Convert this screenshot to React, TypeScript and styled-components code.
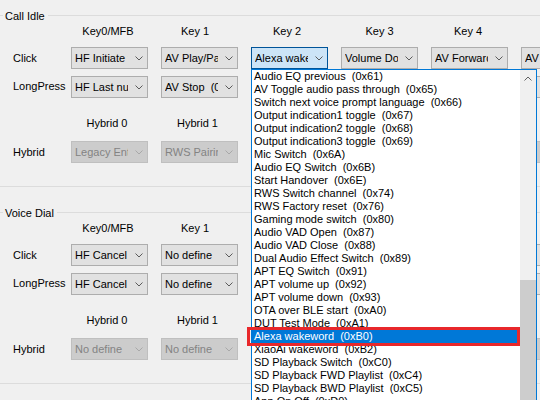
import React from "react";
import styled, { createGlobalStyle, css } from "styled-components";

const GlobalStyle = createGlobalStyle`
  html, body { margin: 0; padding: 0; background: #f0f0f0; }
  body {
    font-family: "Liberation Sans", Arial, sans-serif;
    font-size: 11px;
    color: #000;
  }
`;

const Window = styled.div`
  position: relative;
  width: 540px;
  height: 400px;
  overflow: hidden;
  background: #f0f0f0;
  padding-top: 10px;
  box-sizing: border-box;
`;

const Group = styled.section`
  display: flex;
  flex-direction: column;
  & + & {
    margin-top: 20px;
  }
`;

const TitleRow = styled.div`
  display: flex;
  align-items: flex-start;
  height: 13px;
  line-height: 13px;
`;

const TitleLine = styled.div<{ $grow?: boolean }>`
  height: 1px;
  margin-top: 5px;
  background: #dcdcdc;
  ${(p) => (p.$grow ? "flex: 1;" : "width: 3px;")}
`;

const TitleText = styled.span`
  padding: 0 3px 0 2px;
  white-space: nowrap;
`;

const Grid = styled.div<{ $top: number; $h: number }>`
  display: grid;
  grid-template-columns: 58px repeat(6, 77px);
  column-gap: 13px;
  align-items: center;
  height: ${(p) => p.$h}px;
  margin-top: ${(p) => p.$top}px;
`;

const HeaderCell = styled.div<{ $nudge?: number }>`
  text-align: center;
  white-space: nowrap;
  line-height: 14px;
  margin-left: ${(p) => ((p.$nudge ?? 0) > 0 ? (p.$nudge ?? 0) * 2 : 0)}px;
  margin-right: ${(p) => ((p.$nudge ?? 0) < 0 ? -(p.$nudge ?? 0) * 2 : 0)}px;
`;

const RowLabel = styled.div<{ $dy?: number }>`
  padding-left: 13px;
  white-space: nowrap;
  line-height: 13px;
  margin-top: ${(p) => (p.$dy ?? 0) * 2}px;
`;

type ComboState = "normal" | "open" | "disabled";

const ComboBox = styled.div<{ $state: ComboState }>`
  box-sizing: border-box;
  width: 77px;
  height: 22px;
  display: flex;
  align-items: center;
  border: 1px solid #adadad;
  background: #e1e1e1;
  color: #000;
  ${(p) =>
    p.$state === "open" &&
    css`
      border-color: #005499;
      background: #cce4f7;
    `}
  ${(p) =>
    p.$state === "disabled" &&
    css`
      border-color: #bfbfbf;
      background: #cccccc;
      color: #838383;
    `}
`;

const ComboText = styled.span`
  width: 53px;
  margin-left: 3px;
  overflow: hidden;
  white-space: pre;
  line-height: 13px;
`;

const ChevronSvg = styled.svg`
  margin-left: auto;
  margin-right: 4px;
  flex: none;
`;

const Chevron = ({ color, up }: { color: string; up?: boolean }) => (
  <ChevronSvg width="8" height="5" viewBox="0 0 8 5">
    <path
      d={up ? "M0.5 4.5 L4 1 L7.5 4.5" : "M0.5 0.5 L4 4 L7.5 0.5"}
      fill="none"
      stroke={color}
      strokeWidth="1"
    />
  </ChevronSvg>
);

const Combo = ({ text, state = "normal" }: { text: string; state?: ComboState }) => (
  <ComboBox $state={state}>
    <ComboText>{text}</ComboText>
    <Chevron color={state === "disabled" ? "#a8a8a8" : "#5a5a5a"} />
  </ComboBox>
);

const BottomLine = styled.div`
  height: 1px;
  background: #dcdcdc;
  margin-top: 23px;
`;

/* Dropdown list */
const DropDown = styled.div`
  position: absolute;
  left: 251px;
  top: 69px;
  width: 286px;
  height: 360px;
  box-sizing: border-box;
  border: 1px solid #0078d7;
  background: #fff;
  display: flex;
  z-index: 2;
`;

const ItemList = styled.ul`
  list-style: none;
  margin: 0;
  padding: 0;
  flex: 1;
  overflow: hidden;
`;

const Item = styled.li<{ $selected?: boolean }>`
  height: 13px;
  line-height: 13px;
  padding-left: 2px;
  white-space: pre;
  color: ${(p) => (p.$selected ? "#fff" : "#000")};
  background: ${(p) => (p.$selected ? "#0078d7" : "transparent")};
`;

const ScrollBar = styled.div`
  width: 16px;
  flex: none;
  background: #f0f0f0;
  display: flex;
  flex-direction: column;
`;

const ScrollButton = styled.div`
  height: 17px;
  display: flex;
  align-items: center;
  justify-content: center;
  & > svg {
    margin: 0;
  }
`;

const ScrollThumb = styled.div`
  margin-top: 193px;
  flex: 1;
  background: #cdcdcd;
`;

const Highlight = styled.div`
  position: absolute;
  left: 247px;
  top: 327px;
  width: 273px;
  height: 19px;
  box-sizing: border-box;
  border: 3px solid #e8282b;
  z-index: 3;
`;

const items = [
  "Audio EQ previous  (0x61)",
  "AV Toggle audio pass through  (0x65)",
  "Switch next voice prompt language  (0x66)",
  "Output indication1 toggle  (0x67)",
  "Output indication2 toggle  (0x68)",
  "Output indication3 toggle  (0x69)",
  "Mic Switch  (0x6A)",
  "Audio EQ Switch  (0x6B)",
  "Start Handover  (0x6E)",
  "RWS Switch channel  (0x74)",
  "RWS Factory reset  (0x76)",
  "Gaming mode switch  (0x80)",
  "Audio VAD Open  (0x87)",
  "Audio VAD Close  (0x88)",
  "Dual Audio Effect Switch  (0x89)",
  "APT EQ Switch  (0x91)",
  "APT volume up  (0x92)",
  "APT volume down  (0x93)",
  "OTA over BLE start  (0xA0)",
  "DUT Test Mode  (0xA1)",
  "Alexa wakeword  (0xB0)",
  "XiaoAi wakeword  (0xB2)",
  "SD Playback Switch  (0xC0)",
  "SD Playback FWD Playlist  (0xC4)",
  "SD Playback BWD Playlist  (0xC5)",
  "App On Off  (0xD0)",
];

type GroupData = {
  title: string;
  click: string[];
  longPress: string[];
  hybrid: string[];
  openIndex?: number;
};

/* columns 2-5 below the first row sit behind the open list: no visible text */
const groups: GroupData[] = [
  {
    title: "Call Idle",
    click: ["HF Initiate voice dial", "AV Play/Pause", "Alexa wakeword  (0xB0)", "Volume Down", "AV Forward", "AV Backward"],
    longPress: ["HF Last number redial", "AV Stop  (0x..)", "", "", "", ""],
    hybrid: ["Legacy Enter pairing", "RWS Pairing", "", "", "", ""],
    openIndex: 2,
  },
  {
    title: "Voice Dial",
    click: ["HF Cancel voice dial", "No define  (0x00)", "", "", "", ""],
    longPress: ["HF Cancel voice dial", "No define  (0x00)", "", "", "", ""],
    hybrid: ["No define  (0x00)", "No define  (0x00)", "", "", "", ""],
  },
];

const keyHeaders: [string, number][] = [
  ["Key0/MFB", -1.5],
  ["Key 1", -4.5],
  ["Key 2", -2.5],
  ["Key 3", 0],
  ["Key 4", -1.5],
  ["", 0],
];
const hybridHeaders: [string, number][] = [
  ["Hybrid 0", -2.5],
  ["Hybrid 1", -2],
  ["", 0],
  ["", 0],
  ["", 0],
  ["", 0],
];

const KeyGroup = ({ g, showKeyHeaders }: { g: GroupData; showKeyHeaders: [string, number][] }) => (
  <Group>
    <TitleRow>
      <TitleLine />
      <TitleText>{g.title}</TitleText>
      <TitleLine $grow />
    </TitleRow>
    <Grid $top={1} $h={14}>
      <span />
      {showKeyHeaders.map(([h, n], i) => (
        <HeaderCell key={i} $nudge={n}>
          {h}
        </HeaderCell>
      ))}
    </Grid>
    <Grid $top={9} $h={22}>
      <RowLabel>Click</RowLabel>
      {g.click.map((t, i) => (
        <Combo key={i} text={t} state={g.openIndex === i ? "open" : "normal"} />
      ))}
    </Grid>
    <Grid $top={7} $h={22}>
      <RowLabel $dy={-1}>LongPress</RowLabel>
      {g.longPress.map((t, i) => (
        <Combo key={i} text={t} />
      ))}
    </Grid>
    <Grid $top={18} $h={14}>
      <span />
      {hybridHeaders.map(([h, n], i) => (
        <HeaderCell key={i} $nudge={n}>
          {h}
        </HeaderCell>
      ))}
    </Grid>
    <Grid $top={11} $h={22}>
      <RowLabel $dy={0.5}>Hybrid</RowLabel>
      {g.hybrid.map((t, i) => (
        <Combo key={i} text={t} state="disabled" />
      ))}
    </Grid>
    <BottomLine />
  </Group>
);

export default function App() {
  return (
    <>
      <GlobalStyle />
      <Window>
        {groups.map((g, gi) => (
          <KeyGroup
            key={g.title}
            g={g}
            showKeyHeaders={
              gi === 0 ? keyHeaders : keyHeaders.map(([h, n], i) => [i < 2 ? h : "", n] as [string, number])
            }
          />
        ))}
        <DropDown>
          <ItemList>
            {items.map((t) => (
              <Item key={t} $selected={t.startsWith("Alexa")}>
                {t}
              </Item>
            ))}
          </ItemList>
          <ScrollBar>
            <ScrollButton>
              <Chevron color="#606060" up />
            </ScrollButton>
            <ScrollThumb />
          </ScrollBar>
        </DropDown>
        <Highlight />
      </Window>
    </>
  );
}
